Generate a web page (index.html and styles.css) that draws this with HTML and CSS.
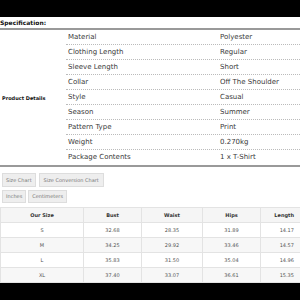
FILE: index.html
```html
<!DOCTYPE html>
<html>
<head>
<meta charset="utf-8">
<link rel="stylesheet" href="styles.css">
</head>
<body>
<div class="topbar"></div>
<div class="spec-title">Specification:</div>
<div class="details">
  <div class="details-label">Product Details</div>
  <div class="details-rows">
    <div class="row"><span class="key">Material</span><span class="val">Polyester</span></div>
    <div class="row"><span class="key">Clothing Length</span><span class="val">Regular</span></div>
    <div class="row"><span class="key">Sleeve Length</span><span class="val">Short</span></div>
    <div class="row"><span class="key">Collar</span><span class="val">Off The Shoulder</span></div>
    <div class="row"><span class="key">Style</span><span class="val">Casual</span></div>
    <div class="row"><span class="key">Season</span><span class="val">Summer</span></div>
    <div class="row"><span class="key">Pattern Type</span><span class="val">Print</span></div>
    <div class="row"><span class="key">Weight</span><span class="val">0.270kg</span></div>
    <div class="row"><span class="key">Package Contents</span><span class="val">1 x T-Shirt</span></div>
  </div>
</div>
<div class="tabs">
  <span class="tab">Size Chart</span>
  <span class="tab">Size Conversion Chart</span>
</div>
<div class="tabs units">
  <span class="tab">Inches</span>
  <span class="tab">Centimeters</span>
</div>
<table class="sizes">
  <thead>
    <tr><th class="c1">Our Size</th><th class="c2">Bust</th><th class="c3">Waist</th><th class="c4">Hips</th><th class="c5">Length</th></tr>
  </thead>
  <tbody>
    <tr><td>S</td><td>32.68</td><td>28.35</td><td>31.89</td><td>14.17</td></tr>
    <tr><td>M</td><td>34.25</td><td>29.92</td><td>33.46</td><td>14.57</td></tr>
    <tr><td>L</td><td>35.83</td><td>31.50</td><td>35.04</td><td>14.96</td></tr>
    <tr><td>XL</td><td>37.40</td><td>33.07</td><td>36.61</td><td>15.35</td></tr>
  </tbody>
</table>
<div class="bottombar"></div>
</body>
</html>
```
FILE: styles.css
```css
html, body {
  margin: 0;
  padding: 0;
  width: 300px;
  height: 300px;
  overflow: hidden;
  background: #fff;
  font-family: "DejaVu Sans", Verdana, sans-serif;
  color: #333;
}
.topbar {
  height: 17px;
  background: #000;
}
.spec-title {
  height: 11px;
  line-height: 11px;
  font-size: 6px;
  font-weight: bold;
  color: #111;
  border-bottom: 2px solid #999;
}
.details {
  display: flex;
  border-bottom: 2px solid #999;
}
.details-label {
  width: 66px;
  display: flex;
  align-items: center;
  padding-left: 2px;
  box-sizing: border-box;
  font-size: 5px;
  font-weight: bold;
  color: #111;
}
.details-rows {
  flex: 1;
}
.row {
  display: flex;
  height: 14px;
  line-height: 14px;
  font-size: 7px;
  color: #3a3a3a;
  border-bottom: 1px dotted #bbb;
}
.row:last-child {
  border-bottom: none;
  height: 15px;
  line-height: 15px;
}
.key {
  width: 152px;
  padding-left: 2px;
}
.val {
  flex: 1;
}
.tabs {
  display: flex;
  gap: 3px;
  padding: 6px 0 0 2px;
}
.tab {
  font-size: 5px;
  color: #777;
  background: #eee;
  border: 1px solid #ddd;
  padding: 0 3px;
  height: 12px;
  line-height: 12px;
}
.tab + .tab {
  padding: 0 4px;
}
.units {
  padding-top: 3px;
  gap: 2px;
}
.units .tab {
  height: 11px;
  line-height: 11px;
  padding: 0 3px;
}
.sizes {
  margin-top: 4px;
  border-collapse: collapse;
  width: 300px;
  table-layout: fixed;
  font-size: 5px;
  color: #555;
}
.sizes th, .sizes td {
  border: 1px solid #e3e3e3;
  height: 14px;
  padding: 0;
  text-align: center;
  white-space: nowrap;
}
.sizes th {
  background: #f5f5f5;
  color: #333;
  font-weight: bold;
}
.sizes th:last-child, .sizes td:last-child {
  border-right: none;
  text-align: right;
  padding-right: 6px;
}
.sizes tbody tr:nth-child(even) td {
  background: #f7f7f7;
}
.c1 { width: 82px; }
.c2 { width: 57px; }
.c3 { width: 60px; }
.c4 { width: 57px; }
.bottombar {
  height: 30px;
  background: #000;
}
```
